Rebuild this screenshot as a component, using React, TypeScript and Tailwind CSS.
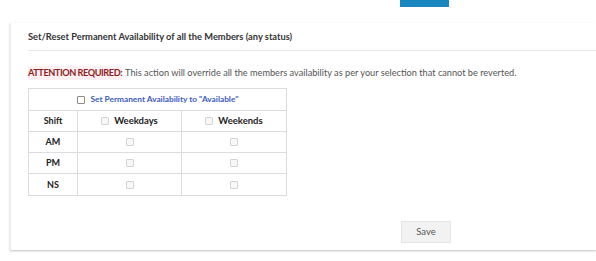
import React from "react";

// small gray checkbox used inside the grid
function Box({ dim = false }: { dim?: boolean }) {
  return (
    <span
      className={
        "inline-block w-[8px] h-[8px] border rounded-[1px] " +
        (dim ? "border-[#d4d4d4] bg-[#f7f7f7]" : "border-[#8a8a8a] bg-white")
      }
    />
  );
}

export default function App() {
  const rows = ["AM", "PM", "NS"];

  return (
    <div className="w-[596px] h-[261px] bg-white overflow-hidden font-['Lato',sans-serif] text-[#444]">
      {/* top strip, only the bottom of the blue button shows */}
      <div className="h-[23px] flex">
        <div className="ml-[400px] w-[49px] h-[7px] bg-[#1a86bf]" />
      </div>

      {/* card */}
      <div className="ml-[10px] h-[227px] bg-white border-l border-[#eeeeee] shadow-[0_1px_2px_rgba(0,0,0,0.25)] flex flex-col pl-[17px]">
        <div className="h-[27px] flex items-center text-[9.3px] font-bold text-[#333] whitespace-nowrap">
          Set/Reset Permanent Availability of all the Members (any status)
        </div>
        <div className="h-[1px] bg-[#e8e8e8]" />

        <div className="mt-[14px] h-[16px] flex items-center text-[9.2px] text-[#555] whitespace-nowrap">
          <span className="font-bold text-[#8e1e1e] bg-[#fdf0f3] tracking-[-0.45px]">ATTENTION REQUIRED:</span>
          <span className="ml-[3px]">
            This action will override all the members availability as per your selection that cannot be reverted.
          </span>
        </div>

        {/* availability grid */}
        <div className="mt-[7px] w-[259px] border border-[#dcdcdc] text-[9px]">
          <div className="h-[22px] flex items-center justify-center gap-[6px] border-b border-[#dcdcdc]">
            <Box />
            <span className="text-[#3d5cc0] font-bold text-[8.3px]">Set Permanent Availability to "Available"</span>
          </div>
          <div className="grid grid-cols-[49px_104px_1fr] h-[21px] border-b border-[#dcdcdc] font-bold text-[#222]">
            <div className="flex items-center justify-center border-r border-[#dcdcdc]">Shift</div>
            <div className="flex items-center justify-center gap-[5px] border-r border-[#dcdcdc] text-[9.5px]">
              <Box dim />
              <span>Weekdays</span>
            </div>
            <div className="flex items-center justify-center gap-[5px] text-[9.5px]">
              <Box dim />
              <span>Weekends</span>
            </div>
          </div>
          {rows.map((r, i) => (
            <div
              key={r}
              className={
                "grid grid-cols-[49px_104px_1fr] h-[21px] " +
                (i < rows.length - 1 ? "border-b border-[#dcdcdc]" : "")
              }
            >
              <div className="flex items-center justify-center border-r border-[#dcdcdc] font-bold text-[#222]">
                {r}
              </div>
              <div className="flex items-center justify-center border-r border-[#dcdcdc]">
                <Box dim />
              </div>
              <div className="flex items-center justify-center">
                <Box dim />
              </div>
            </div>
          ))}
        </div>

        <div className="mt-[25px] ml-[373px] w-[50px] h-[22px] bg-[#f2f2f2] border border-[#e6e6e6] flex items-center justify-center text-[9.5px] text-[#555]">
          Save
        </div>
      </div>
    </div>
  );
}
